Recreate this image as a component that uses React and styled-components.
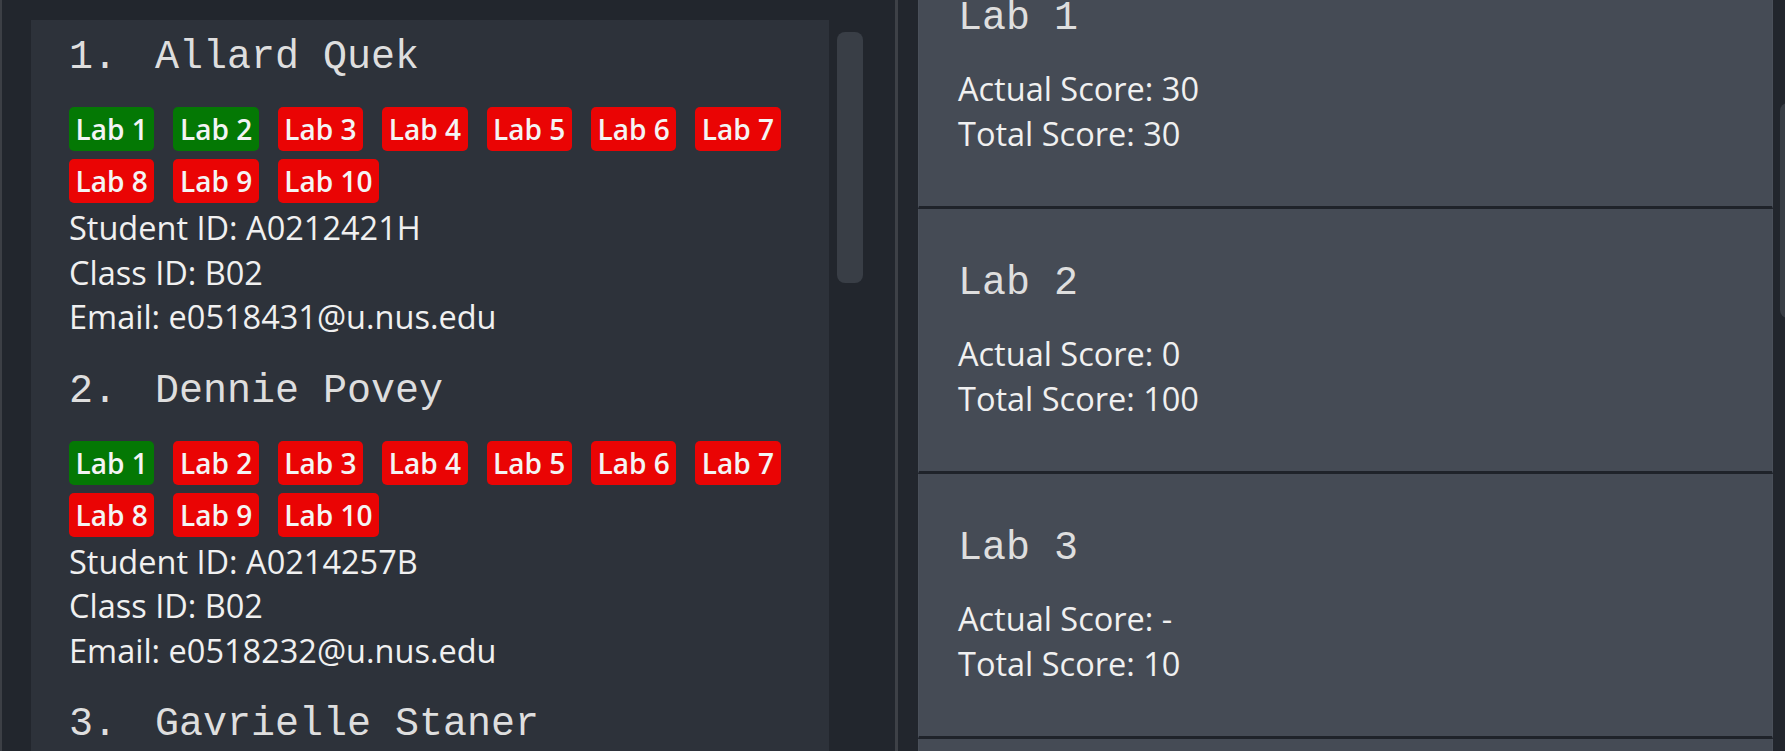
import React, { useLayoutEffect, useRef } from 'react'
import styled, { createGlobalStyle } from 'styled-components'

const GlobalStyle = createGlobalStyle`
  html, body {
    margin: 0;
    padding: 0;
    background: #22262d;
    overflow: hidden;
  }
  #root {
    width: 1785px;
    height: 751px;
  }
`

const Window = styled.div`
  display: flex;
  width: 1785px;
  height: 751px;
  box-sizing: border-box;
  background: #22262d;
  border-left: 2px solid #3c3f45;
  overflow: hidden;
`

const StudentPane = styled.div`
  display: flex;
  flex: 0 0 893px;
  height: 100%;
  box-sizing: border-box;
  padding: 20px 0 0 29px;
`

const StudentList = styled.div`
  flex: 0 0 798px;
  background: #2d323a;
  overflow: hidden;
`

const Track = styled.div`
  flex: 0 0 ${(p) => p.width}px;
  overflow: hidden;
`

const Thumb = styled.div`
  width: 26px;
  height: ${(p) => p.height}px;
  margin-top: ${(p) => p.top}px;
  margin-left: ${(p) => p.left}px;
  border-radius: 8px;
  background: #393e46;
`

const Separator = styled.div`
  flex: 0 0 3px;
  background: #3e4147;
`

const LabPane = styled.div`
  display: flex;
  flex: 1;
  height: 100%;
  box-sizing: border-box;
  padding-left: 20px;
`

const LabList = styled.div`
  flex: 0 0 855px;
  height: 100%;
  overflow-y: scroll;
  scrollbar-width: none;
  &::-webkit-scrollbar {
    display: none;
  }
`

const StudentCard = styled.div`
  padding: 15px 20px 14px 38px;
`

const Title = styled.div`
  display: flex;
  gap: 14px;
  font-family: "Liberation Mono", "DejaVu Sans Mono", monospace;
  font-size: 40px;
  color: #dedede;
  white-space: pre;
`

const Tags = styled.div`
  display: flex;
  flex-wrap: wrap;
  gap: 8px 19px;
  margin-top: 27px;
  max-width: 730px;
`

const Tag = styled.span`
  padding: 3px 6.6px;
  border-radius: 5px;
  background: ${(p) => (p.done ? '#047804' : '#ea0404')};
  color: #f4f4f4;
  font-family: "Open Sans", "Noto Sans", sans-serif;
  font-size: 28px;
  font-weight: 600;
`

const Info = styled.div`
  font-family: "Open Sans", "Noto Sans", sans-serif;
  font-size: 32.5px;
  line-height: 44.5px;
  color: #f0f0f0;
`

const Details = styled.div`
  margin-top: 3px;
`

const LabCard = styled.div`
  box-sizing: border-box;
  padding: 52px 40px 50px 39px;
  background: #454b55;
  border-left: 1px solid #4a505a;
  border-right: 1px solid #4a505a;
  border-bottom: 3px solid #1f232a;
`

const Scores = styled.div`
  margin-top: 26px;
`

const students = [
  { name: 'Allard Quek', done: 2, id: 'A0212421H', cls: 'B02', email: 'e0518431@u.nus.edu' },
  { name: 'Dennie Povey', done: 1, id: 'A0214257B', cls: 'B02', email: 'e0518232@u.nus.edu' },
  { name: 'Gavrielle Staner', done: 1, id: 'A0213578C', cls: 'B02', email: 'e0518764@u.nus.edu' }
]

const labs = [
  { n: 1, actual: '30', total: '30' },
  { n: 2, actual: '0', total: '100' },
  { n: 3, actual: '-', total: '10' },
  { n: 4, actual: '-', total: '20' }
]

const App = () => {
  const labListRef = useRef(null)

  useLayoutEffect(() => {
    if (labListRef.current) labListRef.current.scrollTop = 56
  }, [])

  return (
    <>
      <GlobalStyle />
      <Window>
        <StudentPane>
          <StudentList>
            {students.map((s, i) => (
              <StudentCard key={s.id}>
                <Title>
                  <span>{i + 1}. </span>
                  <span>{s.name}</span>
                </Title>
                <Tags>
                  {Array.from({ length: 10 }, (_, j) => (
                    <Tag key={j} done={j < s.done}>Lab {j + 1}</Tag>
                  ))}
                </Tags>
                <Details>
                  <Info>Student ID: {s.id}</Info>
                  <Info>Class ID: {s.cls}</Info>
                  <Info>Email: {s.email}</Info>
                </Details>
              </StudentCard>
            ))}
          </StudentList>
          <Track width={66}>
            <Thumb top={12} left={8} height={251} />
          </Track>
        </StudentPane>
        <Separator />
        <LabPane>
          <LabList ref={labListRef}>
            {labs.map((lab) => (
              <LabCard key={lab.n}>
                <Title>Lab {lab.n}</Title>
                <Scores>
                  <Info>Actual Score: {lab.actual}</Info>
                  <Info>Total Score: {lab.total}</Info>
                </Scores>
              </LabCard>
            ))}
          </LabList>
          <Track width={12}>
            <Thumb top={103} left={7} height={215} />
          </Track>
        </LabPane>
      </Window>
    </>
  )
}

export default App
